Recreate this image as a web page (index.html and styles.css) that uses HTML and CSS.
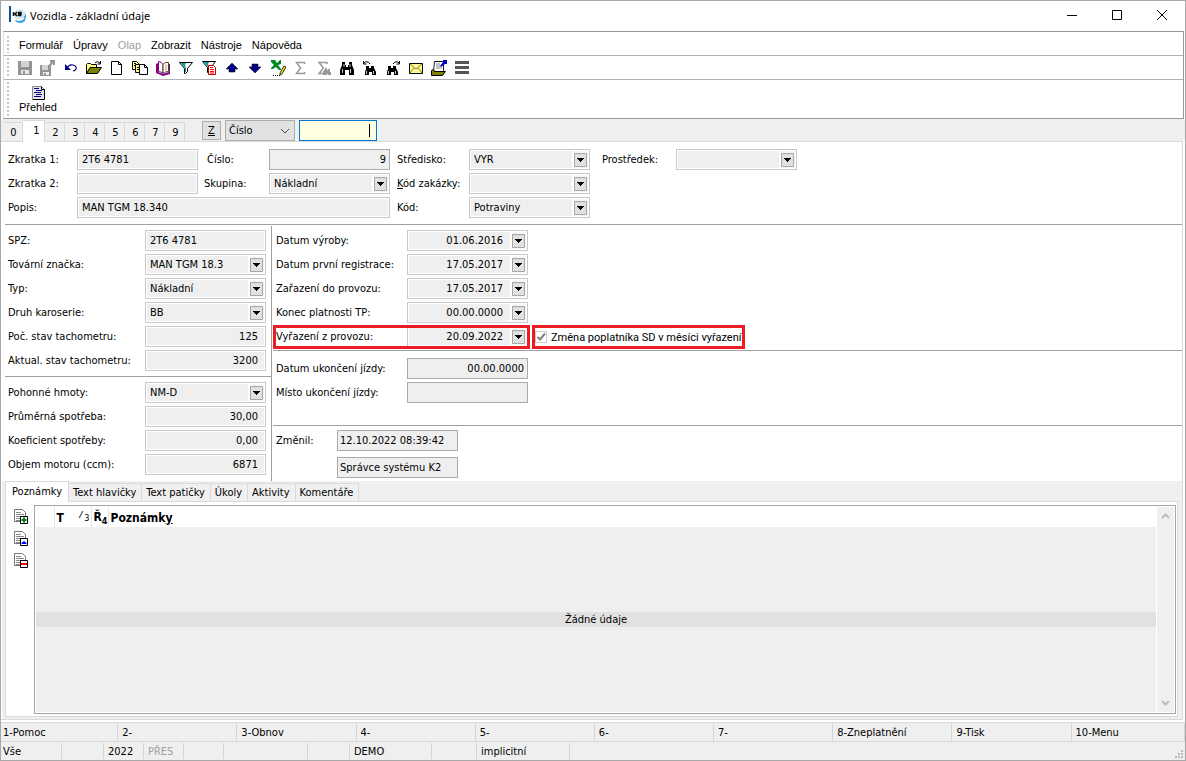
FILE: index.html
```html
<!DOCTYPE html>
<html lang="cs">
<head>
<meta charset="utf-8">
<title>Vozidla - základní údaje</title>
<link rel="stylesheet" href="styles.css">
</head>
<body>
<header class="titlebar">
  <svg class="logo" width="18" height="18" viewBox="0 0 18 18"><circle cx="11" cy="9" r="6" fill="#d3e9f6"/><path d="M6 14q8 2 11-7q1 10-6 10q-4 0-5-3z" fill="#38a5dc"/><path d="M8 14q4 1 7-2" stroke="#fff" stroke-width="1.500" fill="none"/><path d="M0 0h2v16H0z" fill="#0b5394"/><path d="M4.500 6v4M5 8h2M8 6L6 8l2 2M9 6.500h3v1.500h-2.500v1.500H12.500" stroke="#111" stroke-width="1.500" fill="none"/></svg>
  <h1 class="title">Vozidla - základní údaje</h1>
  <button class="win" aria-label="Minimalizovat"><svg width="12" height="12"><path d="M1 6.500h10" stroke="#000"/></svg></button>
  <button class="win" aria-label="Maximalizovat"><svg width="12" height="12"><path d="M1.500 1.500h9v9h-9z" stroke="#000" fill="none"/></svg></button>
  <button class="win" aria-label="Zavřít"><svg width="12" height="12"><path d="M1 1l10 10M11 1L1 11" stroke="#000" fill="none"/></svg></button>
</header>

<div class="toolbox">
  <nav class="menu">
    <button>Formulář</button><button>Úpravy</button><button disabled>Olap</button><button>Zobrazit</button><button>Nástroje</button><button>Nápověda</button>
  </nav>
  <div class="tools">
    <button aria-label="Uložit"><svg viewBox="0 0 16 16"><path d="M1 1h14v14H1z" fill="#949494"/><path d="M4 1h8v6H4z" fill="#d4d4d4"/><path d="M4 10h8v4H4z" fill="#e8e8e8"/><path d="M6 11h2v3H6z" fill="#949494"/></svg></button>
    <button aria-label="Uložit a zavřít"><svg viewBox="0 0 16 16"><path d="M0 5h11v11H0z" fill="#949494"/><path d="M2 5h6v5H2z" fill="#d4d4d4"/><path d="M3 12h6v3H3z" fill="#eee"/><path d="M4 13h2v2H4zM10 0h5v5h-2V3l-3 4-2-1 3-4h-1z" fill="#949494"/></svg></button>
    <button aria-label="Zpět"><svg viewBox="0 0 16 16"><path d="M2 4v6h6z" fill="#000080"/><path d="M4 8q2-4 6-3q4 1 3 4q-1 2-3 2" fill="none" stroke="#000080" stroke-width="1.200"/></svg></button>
    <button aria-label="Otevřít"><svg viewBox="0 0 16 16"><path d="M0.500 13.500v-9l1-1h3l1 1h5v3" fill="#ffff80" stroke="#000"/><path d="M0.500 13.500l3.500-6h11.500l-4 6z" fill="#808000" stroke="#000"/><path d="M9 3q2-3 5 0M14.500 1v3h-3" fill="none" stroke="#000"/></svg></button>
    <button aria-label="Nový"><svg viewBox="0 0 16 16"><path d="M2.500 1.500h7l3 3v10h-10z" fill="#fff" stroke="#000"/><path d="M9.500 1.500v3h3" fill="none" stroke="#000"/></svg></button>
    <button aria-label="Kopírovat"><svg viewBox="0 0 16 16"><path d="M0.500 1.500h4l2 2v6h-6z" fill="#ffff80" stroke="#000"/><path d="M3.500 4.500h4l1 1v7h-5z" fill="#ffff80" stroke="#000"/><path d="M7.500 4.500h5l3 3v7h-8z" fill="#fff" stroke="#000"/><path d="M12.500 4.500v3h3M2 3.500h2M2 5.500h1M5 7.500h2M5 9.500h2" fill="none" stroke="#000"/></svg></button>
    <button aria-label="Kniha"><svg viewBox="0 0 16 16"><path d="M1 4l2-1v9l5 2 6-2V4h1v10l-7 2-7-3z" fill="#800080"/><path d="M3.500 1.500q3 0 4.500 3v9q-2-2-4.500-2z" fill="#fff" stroke="#800080"/><path d="M8 4.500q2-3 5.500-2v9q-3 0-5.500 2z" fill="#fffbd0" stroke="#444"/><path d="M10 6l2-1M10 8l2-1M10 10l2-1" stroke="#aaa"/></svg></button>
    <button aria-label="Filtr"><svg viewBox="0 0 16 16"><path d="M1.500 2.500h13l-5 6v3l-2 2h-1v-5z" fill="#fff" stroke="#000"/><path d="M3 3h5L7 5l1 3v4H7V8z" fill="#00a0a0"/></svg></button>
    <button aria-label="Filtr záznamů"><svg viewBox="0 0 16 16"><path d="M1.500 1.500h13l-5 6v3l-2 2h-1v-5z" fill="#fff" stroke="#000"/><path d="M3 2h5L7 4l1 3v4H7V7z" fill="#00a0a0"/><path d="M7.500 5.500h5l2 2v7h-7z" fill="#fff" stroke="#b00"/><path d="M9 7.500h3M9 9.500h4M9 11.500h4M9 13h4" stroke="#f00"/></svg></button>
    <button aria-label="Nahoru"><svg viewBox="0 0 16 16"><path d="M8 3l6 6h-3v3H5V9H2z" fill="#000080" stroke="#000" stroke-width=".5"/></svg></button>
    <button aria-label="Dolů"><svg viewBox="0 0 16 16"><path d="M8 13l6-6h-3V4H5v3H2z" fill="#000080" stroke="#000" stroke-width=".5"/></svg></button>
    <button aria-label="Excel"><svg viewBox="0 0 16 16"><path d="M1 0h4l2 3 3-3h1v4L8 5l3 4v1H9L6 7l-3 2H1V8l3-3-3-3z" fill="#008a20"/><path d="M10 13l4-7 2 1-4 7-2 1z" fill="#ffe000" stroke="#000" stroke-width=".8"/><path d="M3 15.500h7" stroke="#000" stroke-dasharray="1 1"/></svg></button>
    <button aria-label="Součet"><svg viewBox="0 0 16 16"><path d="M11.500 4V2.500h-8l4 5.500-4 5.500h8V12" fill="none" stroke="#999" stroke-width="1.500"/></svg></button>
    <button aria-label="Součet výběru"><svg viewBox="0 0 16 16"><path d="M11 4V2.500H3L7.500 8 3 13.500h5" fill="none" stroke="#999" stroke-width="1.500"/><path d="M8 10h1V8h2v2h1V9h2v3h1v3h-3v-1h-1v1H7v-3z" fill="#999"/></svg></button>
    <button aria-label="Hledat"><svg viewBox="0 0 16 16"><path d="M3 2h3v3h1v2h2V5h1V2h3v3l2 5v5h-5v-5H6v5H1v-5l2-5z" fill="#000"/><path d="M3.500 9v4M11.500 9v4M5 4v3M11 4v3" stroke="#fff" stroke-width=".8"/></svg></button>
    <button aria-label="Hledat předchozí"><svg viewBox="0 0 16 16"><path d="M4 6h3v2h2V6h3v2l2 4v3h-4v-3H7v3H3v-3l1-3z" fill="#000"/><path d="M4.500 11v3M11.500 11v3" stroke="#fff" stroke-width=".8"/><path d="M2 3q3-3 6 1M1.500 1v3h3" fill="none" stroke="#000"/></svg></button>
    <button aria-label="Hledat další"><svg viewBox="0 0 16 16"><path d="M3 6h3v2h2V6h3v2l2 4v3H9v-3H6v3H2v-3l1-3z" fill="#000"/><path d="M3.500 11v3M10.500 11v3" stroke="#fff" stroke-width=".8"/><path d="M8 4q3-4 6-1M14.500 1v3h-3" fill="none" stroke="#000"/></svg></button>
    <button aria-label="Pošta"><svg viewBox="0 0 16 16"><path d="M1.500 3.500h13v10h-13z" fill="#fff9a0" stroke="#000"/><path d="M2 4l6 5 6-5M2 13l4-5M14 13l-4-5" fill="none" stroke="#a08000"/></svg></button>
    <button aria-label="Dokumenty"><svg viewBox="0 0 16 16"><path d="M3.500 1.500h9v10h-10z" fill="#fff" stroke="#222"/><path d="M4 1.500h9" stroke="#000" stroke-dasharray="1 1"/><path d="M5 4h4M5 6h4M5 8h6" stroke="#888"/><path d="M9 6l3-4V0h4v4h-2l-4 3z" fill="#0000c0"/><path d="M0.500 15.500v-5l2-1 1 2h11l-3 4z" fill="#808000" stroke="#000"/></svg></button>
    <button aria-label="Menu"><svg viewBox="0 0 16 16"><path d="M1 2.500h14M1 7.500h14M1 12.500h14" stroke="#555" stroke-width="3"/></svg></button>
  </div>
  <div class="views">
    <button class="view"><svg width="16" height="16" viewBox="0 0 16 16"><path d="M2.500 1.500h9l3 3v10h-12z" fill="#e4e4e4" stroke="#888"/><path d="M14.500 4v10.500H3M11.500 1.500v3h3" fill="none" stroke="#000"/><path d="M4 3.500h5M6 5.500h6M4 7.500h7M6 9.500h6M4 11.500h7" stroke="#000080"/></svg>Přehled</button>
  </div>
</div>

<div class="pages">
  <div class="pagetabs">
    <button class="tab">0</button><button class="tab on">1</button><button class="tab">2</button><button class="tab">3</button><button class="tab">4</button><button class="tab">5</button><button class="tab">6</button><button class="tab">7</button><button class="tab">9</button>
  </div>
  <button class="zbtn"><u>Z</u></button>
  <select class="order" aria-label="Řazení"><option>Číslo</option></select>
  <span class="search"><input aria-label="Hledat"><i class="caret"></i></span>
</div>

<main class="panel">
  <section class="head">
    <label for="z1">Zkratka 1:</label><input class="f" id="z1" value="2T6 4781">
    <label for="ci" class="c2">Číslo:</label><input class="f dark num" id="ci" value="9">
    <label for="st" class="c3">Středisko:</label><select class="f" id="st"><option>VYR</option></select>
    <label for="pr" class="c4">Prostředek:</label><select class="f" id="pr"><option></option></select>
    <label for="z2">Zkratka 2:</label><input class="f" id="z2">
    <label for="sk" class="c2b">Skupina:</label><select class="f" id="sk"><option>Nákladní</option></select>
    <label for="kz" class="c3"><u>K</u>ód zakázky:</label><select class="f" id="kz"><option></option></select>
    <label for="po" class="c1">Popis:</label><input class="f wide" id="po" value="MAN TGM 18.340">
    <label for="ko" class="c3">Kód:</label><select class="f" id="ko"><option>Potraviny</option></select>
  </section>

  <div class="cols">
    <div class="left">
      <section class="grid l1">
        <label for="spz">SPZ:</label><input class="f" id="spz" value="2T6 4781">
        <label for="tz">Tovární značka:</label><select class="f" id="tz"><option>MAN TGM 18.3</option></select>
        <label for="ty">Typ:</label><select class="f" id="ty"><option>Nákladní</option></select>
        <label for="dk">Druh karoserie:</label><select class="f" id="dk"><option>BB</option></select>
        <label for="ps">Poč. stav tachometru:</label><input class="f num pad" id="ps" value="125">
        <label for="as">Aktual. stav tachometru:</label><input class="f num pad" id="as" value="3200">
      </section>
      <section class="grid l2">
        <label for="ph">Pohonné hmoty:</label><select class="f" id="ph"><option>NM-D</option></select>
        <label for="sp">Průměrná spotřeba:</label><input class="f num pad" id="sp" value="30,00">
        <label for="ks">Koeficient spotřeby:</label><input class="f num pad" id="ks" value="0,00">
        <label for="om">Objem motoru (ccm):</label><input class="f num pad" id="om" value="6871">
      </section>
    </div>
    <div class="right">
      <section class="dates">
        <div class="row"><label for="d1">Datum výroby:</label><span class="f combo"><input id="d1" value="01.06.2016"><button aria-label="Vybrat datum"></button></span></div>
        <div class="row"><label for="d2">Datum první registrace:</label><span class="f combo"><input id="d2" value="17.05.2017"><button aria-label="Vybrat datum"></button></span></div>
        <div class="row"><label for="d3">Zařazení do provozu:</label><span class="f combo"><input id="d3" value="17.05.2017"><button aria-label="Vybrat datum"></button></span></div>
        <div class="row"><label for="d4">Konec platnosti TP:</label><span class="f combo"><input id="d4" value="00.00.0000"><button aria-label="Vybrat datum"></button></span></div>
        <div class="row">
          <div class="row marked"><label for="d5">Vyřazení z provozu:</label><span class="f combo"><input id="d5" value="20.09.2022"><button aria-label="Vybrat datum"></button></span></div>
          <div class="check marked"><input type="checkbox" id="sd" checked><label for="sd">Změna poplatníka SD v měsíci vyřazení</label></div>
        </div>
      </section>
      <section class="ride">
        <div class="row"><label for="du">Datum ukončení jízdy:</label><input class="f dark num" id="du" value="00.00.0000"></div>
        <div class="row"><label for="mu">Místo ukončení jízdy:</label><input class="f dark" id="mu"></div>
      </section>
      <section class="changed">
        <label for="zm">Změnil:</label>
        <div class="who"><input class="f dark" id="zm" value="12.10.2022 08:39:42"><input class="f dark" aria-label="Změnil uživatel" value="Správce systému K2"></div>
      </section>
    </div>
  </div>

  <div class="notes">
    <div class="notetabs">
      <button class="ntab on">Poznámky</button><button class="ntab">Text hlavičky</button><button class="ntab">Text patičky</button><button class="ntab">Úkoly</button><button class="ntab">Aktivity</button><button class="ntab">Komentáře</button>
    </div>
    <div class="notebody">
      <div class="noteicons">
        <button aria-label="Přidat"><svg viewBox="0 0 16 16"><path d="M1.500 0.500h8l3 3v9h-11z" fill="#fff" stroke="#777"/><path d="M3 3.500h5M3 5.500h8M3 7.500h8M3 9.500h4M3 11.500h4" stroke="#888"/><path d="M7.500 7.500h7v7h-7z" fill="#fff" stroke="#000"/><path d="M11 8.500v5M8.500 11h5" stroke="#008000" stroke-width="2"/></svg></button>
        <button aria-label="Změnit"><svg viewBox="0 0 16 16"><path d="M1.500 0.500h8l3 3v9h-11z" fill="#fff" stroke="#777"/><path d="M3 3.500h5M3 5.500h8M3 7.500h8M3 9.500h4M3 11.500h4" stroke="#888"/><path d="M7.500 7.500h7v7h-7z" fill="#fff" stroke="#000"/><path d="M8.500 13v-1l2.500-2 2.500 2v1z" fill="#00f"/></svg></button>
        <button aria-label="Odebrat"><svg viewBox="0 0 16 16"><path d="M1.500 0.500h8l3 3v9h-11z" fill="#fff" stroke="#777"/><path d="M3 3.500h5M3 5.500h8M3 7.500h8M3 9.500h4M3 11.500h4" stroke="#888"/><path d="M7.500 7.500h7v7h-7z" fill="#fff" stroke="#000"/><path d="M8 11h6" stroke="#f00" stroke-width="2"/></svg></button>
      </div>
      <div class="list">
        <div class="listmain">
          <table class="cols-head"><thead><tr><th class="k0"></th><th class="k1"><span class="kt"><span>T</span><small>⁄ <sub>3</sub></small></span></th><th class="k2">Ř<sub>4</sub></th><th>Poznámk<u>y</u></th></tr></thead></table>
          <div class="empty"><p>Žádné údaje</p></div>
        </div>
        <div class="scroll">
          <svg width="9" height="6"><path d="M1 5l3.500-3.500L8 5" fill="none" stroke="#bbb" stroke-width="2"/></svg>
          <svg width="9" height="6"><path d="M1 1l3.500 3.500L8 1" fill="none" stroke="#bbb" stroke-width="2"/></svg>
        </div>
      </div>
    </div>
  </div>
</main>

<footer>
  <div class="keys"><span>1-Pomoc</span><span>2-</span><span>3-Obnov</span><span>4-</span><span>5-</span><span>6-</span><span>7-</span><span>8-Zneplatnění</span><span>9-Tisk</span><span>10-Menu</span></div>
  <div class="status"><span class="w60">Vše</span><span class="w42"></span><span class="w40">2022</span><span class="w40 off">PŘES</span><span class="w40"></span><span class="w86"></span><span class="w42"></span><span class="w80">DEMO</span><span class="w46"></span><span class="w92">implicitní</span>
    <svg class="grip" width="9" height="9"><path d="M6 0h2v2H6zM3 3h2v2H3zM6 3h2v2H6zM0 6h2v2H0zM3 6h2v2H3zM6 6h2v2H6z" fill="#bbb"/></svg></div>
</footer>
</body>
</html>
```
FILE: styles.css
```css
* { box-sizing: border-box; }
body {
  margin: 0;
  min-height: 100vh;
  display: flex;
  flex-direction: column;
  border: 1px solid #a8a8a8;
  background: #fff;
  color: #000;
  font: 11px/14px "DejaVu Sans Condensed", "Noto Sans", sans-serif;
}
button, input, select { font: inherit; color: inherit; margin: 0; padding: 0; border-radius: 0; }
button { border: 0; background: none; }
svg { display: block; }

.titlebar { display: flex; align-items: center; height: 30px; padding: 0 11px 2px 8px; }
.title { flex: 1; margin: 0 0 0 3px; padding-top: 2px; font: 11px/16px "Noto Sans", sans-serif; }
.win { width: 24px; height: 24px; margin-left: 21px; display: grid; place-items: center; }

.toolbox { margin: 0 1px 0 2px; border: 1px solid #999; border-left-color: #ddd; }
.menu, .tools, .views { display: flex; align-items: center; height: 24px; border-bottom: 1px solid #b0b0b4; }
.menu::before, .tools::before, .views::before {
  content: "";
  width: 2px;
  align-self: stretch;
  margin: 2px 0 2px 3px;
  background: repeating-linear-gradient(#c4c4c4 0 2px, #fff 2px 4px);
}
.menu { padding-top: 2px; }
.menu button { margin-left: 10px; font: 11px/14px "Liberation Sans", sans-serif; }
.menu button:disabled { color: #a0a0a0; }
.tools { gap: 7px; }
.tools button { width: 16px; height: 16px; }
.tools button:first-child { margin-left: 1px; }
.tools svg, .noteicons svg { width: 16px; height: 16px; }
.views { height: 38px; border-bottom: 0; }
.view { margin-left: 10px; display: flex; flex-direction: column; align-items: center; line-height: 12px; font-family: "Liberation Sans", sans-serif; }

.pages { display: flex; align-items: flex-end; height: 22px; padding-left: 2px; background: #efefef; }
.pagetabs { display: flex; align-items: flex-end; align-self: stretch; }
.tab { width: 20px; height: 19px; padding: 2px 0 0 2px; border: 1px solid #d9d9d9; border-width: 1px 1px 0 0; background: #f0f0f0; }
.tab.on { position: relative; width: 22px; height: 22px; margin-bottom: -1px; padding: 0 0 1px 6px; background: #fff; }
.zbtn { width: 19px; height: 19px; margin: 0 4px 1px 17px; border: 1px solid #adadad; background: #e1e1e1; }
.order {
  appearance: none;
  width: 70px; height: 21px;
  padding-left: 3px;
  border: 1px solid #adadad;
  background: #e1e1e1 url("data:image/svg+xml,%3Csvg xmlns='http://www.w3.org/2000/svg' width='10' height='6'%3E%3Cpath d='M1 1l4 4 4-4' fill='none' stroke='%23444'/%3E%3C/svg%3E") no-repeat right 4px center;
}
.search { display: flex; align-items: center; width: 78px; height: 21px; margin-left: 4px; padding-right: 6px; border: 1px solid #0078d7; background: #ffffe1; }
.search input { flex: 1; min-width: 0; height: 100%; border: 0; background: none; outline: 0; }
.caret { width: 1px; height: 13px; background: #000; }

.panel { flex: 1; display: flex; flex-direction: column; margin-right: 2px; border: 1px solid #d9d9d9; border-left: 0; padding-left: 4px; }
label { white-space: nowrap; line-height: 21px; height: 21px; }
.f {
  width: 121px; height: 21px;
  padding: 0 5px 0 4px;
  border: 1px solid #c8c8c8;
  background: #efefef;
  box-shadow: inset 0 0 0 1px #fff;
}
select.f, .combo button {
  appearance: none;
  background: #efefef url("data:image/svg+xml,%3Csvg xmlns='http://www.w3.org/2000/svg' width='17' height='19'%3E%3Cpath d='M0 0h17v19H0z' fill='%23fff'/%3E%3Cpath d='M2 1h14v17H2z' fill='%23f6f6f6'/%3E%3Cpath d='M2.500 3.500h12v13h-12z' fill='%23e1e1e1' stroke='%23a6a6a6'/%3E%3Cpath d='M5 8h7v1H5zM6 9h5v1H6zM7 10h3v1H7zM8 11h1v1H8z'/%3E%3C/svg%3E") no-repeat right 0 top 0;
}
.dark { border-color: #ababab; box-shadow: none; }
.num { text-align: right; }
.dark.num { padding-right: 3px; }
.num.pad { padding-right: 7px; }
.combo { display: flex; padding: 0; }
.combo input { flex: 1; min-width: 0; height: 19px; padding-right: 7px; border: 0; background: none; text-align: right; }
.combo button { width: 17px; height: 19px; }

.head {
  display: grid;
  grid-template-columns: 69px 121px 71px 121px 79px 121px 86px 121px;
  row-gap: 3px;
  padding: 7px 0 6px 3px;
  border-bottom: 1px solid #a0a0a0;
}
.head .c1 { grid-column: 1; }
.c2 { padding-left: 9px; }
.c2b { padding-left: 6px; }
.c3 { padding-left: 7px; }
.c4 { padding-left: 12px; }
.head .wide { grid-column: 2 / 5; width: auto; }

.cols { display: flex; }
.left { width: 267px; border-right: 1px solid #a0a0a0; margin-top: 1px; }
.grid { display: grid; grid-template-columns: 137px 121px; row-gap: 3px; padding-left: 3px; }
.l1 { padding-top: 4px; padding-bottom: 5px; border-bottom: 1px solid #a0a0a0; }
.l2 { padding-top: 5px; padding-bottom: 6px; }
.right { flex: 1; margin-left: 1px; }
.row { display: flex; }
.row > label { width: 131px; }
.dates, .ride { display: flex; flex-direction: column; gap: 3px; padding-left: 3px; border-bottom: 1px solid #a0a0a0; }
.dates { padding-top: 5px; padding-bottom: 3px; }
.ride { padding-top: 7px; padding-bottom: 22px; }
.changed { display: flex; padding: 4px 0 0 3px; }
.changed label { width: 61px; }
.changed .who { display: flex; flex-direction: column; gap: 6px; }
.changed .f { padding-left: 2px; padding-right: 0; }
.marked { position: relative; }
.marked::after { content: ""; position: absolute; inset: -1px -2px -2px -3px; border: 3px solid #ed1c24; pointer-events: none; }
.check { display: flex; align-items: center; gap: 4px; margin-left: 7px; padding-right: 4px; }
.check.marked::after { inset: -1px 0 -2px -3px; }
.check label { font-family: Roboto, sans-serif; line-height: 23px; }
.check input {
  appearance: none;
  width: 12px; height: 12px;
  border: 1px solid #ccc;
  background: #fff url("data:image/svg+xml,%3Csvg xmlns='http://www.w3.org/2000/svg' width='10' height='10'%3E%3Cpath d='M1.500 5l2.500 2.500 5-6' fill='none' stroke='%23808080' stroke-width='2'/%3E%3C/svg%3E") no-repeat;
}

.notes { flex: 1; display: flex; flex-direction: column; margin-left: -3px; padding: 0 4px 2px 3px; background: #efefef; }
.notetabs { position: relative; display: flex; align-items: flex-end; height: 21px; margin-bottom: -1px; }
.ntab { height: 19px; padding: 1px 5px 0 4px; border: 1px solid #d9d9d9; border-left: 0; background: #f0f0f0; white-space: nowrap; }
.ntab.on { height: 21px; padding: 0 6px 1px; border-left: 1px solid #d9d9d9; border-bottom: 0; background: #fff; }
.notebody { flex: 1; display: flex; border: 1px solid #d9d9d9; background: #fff; padding: 3px 1px 2px 0; }
.noteicons { width: 28px; padding: 4px 0 0 7px; display: flex; flex-direction: column; gap: 6px; }
.noteicons button { width: 16px; height: 16px; }
.list { flex: 1; display: flex; border: 1px solid #a4a4ac; padding: 1px; }
.listmain { flex: 1; display: flex; flex-direction: column; border-right: 1px solid #fff; background: #efefef; }
.cols-head { width: 100%; border-collapse: collapse; table-layout: fixed; background: #fff; }
.cols-head th { height: 20px; padding: 1px 0 0 2px; border-left: 1px solid #e4e4e4; text-align: left; font: bold 12px/14px "DejaVu Sans Condensed", sans-serif; white-space: nowrap; }
.cols-head .k0 { width: 18px; border-left: 0; }
.cols-head .k1 { width: 37px; }
.cols-head .k2 { width: 17px; }
.cols-head small, .cols-head sub { font-size: 9px; line-height: 8px; }
.cols-head small sub { font-weight: normal; }
.kt { display: flex; justify-content: space-between; padding-right: 1px; }
.empty { flex: 1; display: flex; flex-direction: column; justify-content: center; }
.empty p { margin: 0; background: #e1e1e1; text-align: center; line-height: 15px; }
.scroll { width: 17px; display: flex; flex-direction: column; align-items: center; justify-content: space-between; padding: 6px 0; background: #f0f0f0; }

footer { margin-top: 1px; border-top: 1px solid #fff; background: #efefef; }
.keys, .status { display: flex; align-items: center; height: 19px; border-top: 1px solid #d9d9d9; }
.keys span { flex: 119 1 0; padding-left: 4px; border-right: 1px solid #d4d4d4; line-height: 18px; height: 17px; white-space: nowrap; }
.keys span:last-child { flex-grow: 113; }
.keys span:first-child, .status span:first-child { padding-left: 2px; }
.status span { height: 16px; line-height: 18px; padding-left: 4px; border-right: 1px solid #d4d4d4; }
.status .off { color: #a0a0a0; }
.w40 { width: 40px; }
.w42 { width: 42px; }
.w46 { width: 45px; }
.w60 { width: 61px; }
.w80 { width: 82px; }
.w86 { width: 84px; }
.w92 { width: 93px; }
.grip { margin: 6px 1px 0 auto; }
```
